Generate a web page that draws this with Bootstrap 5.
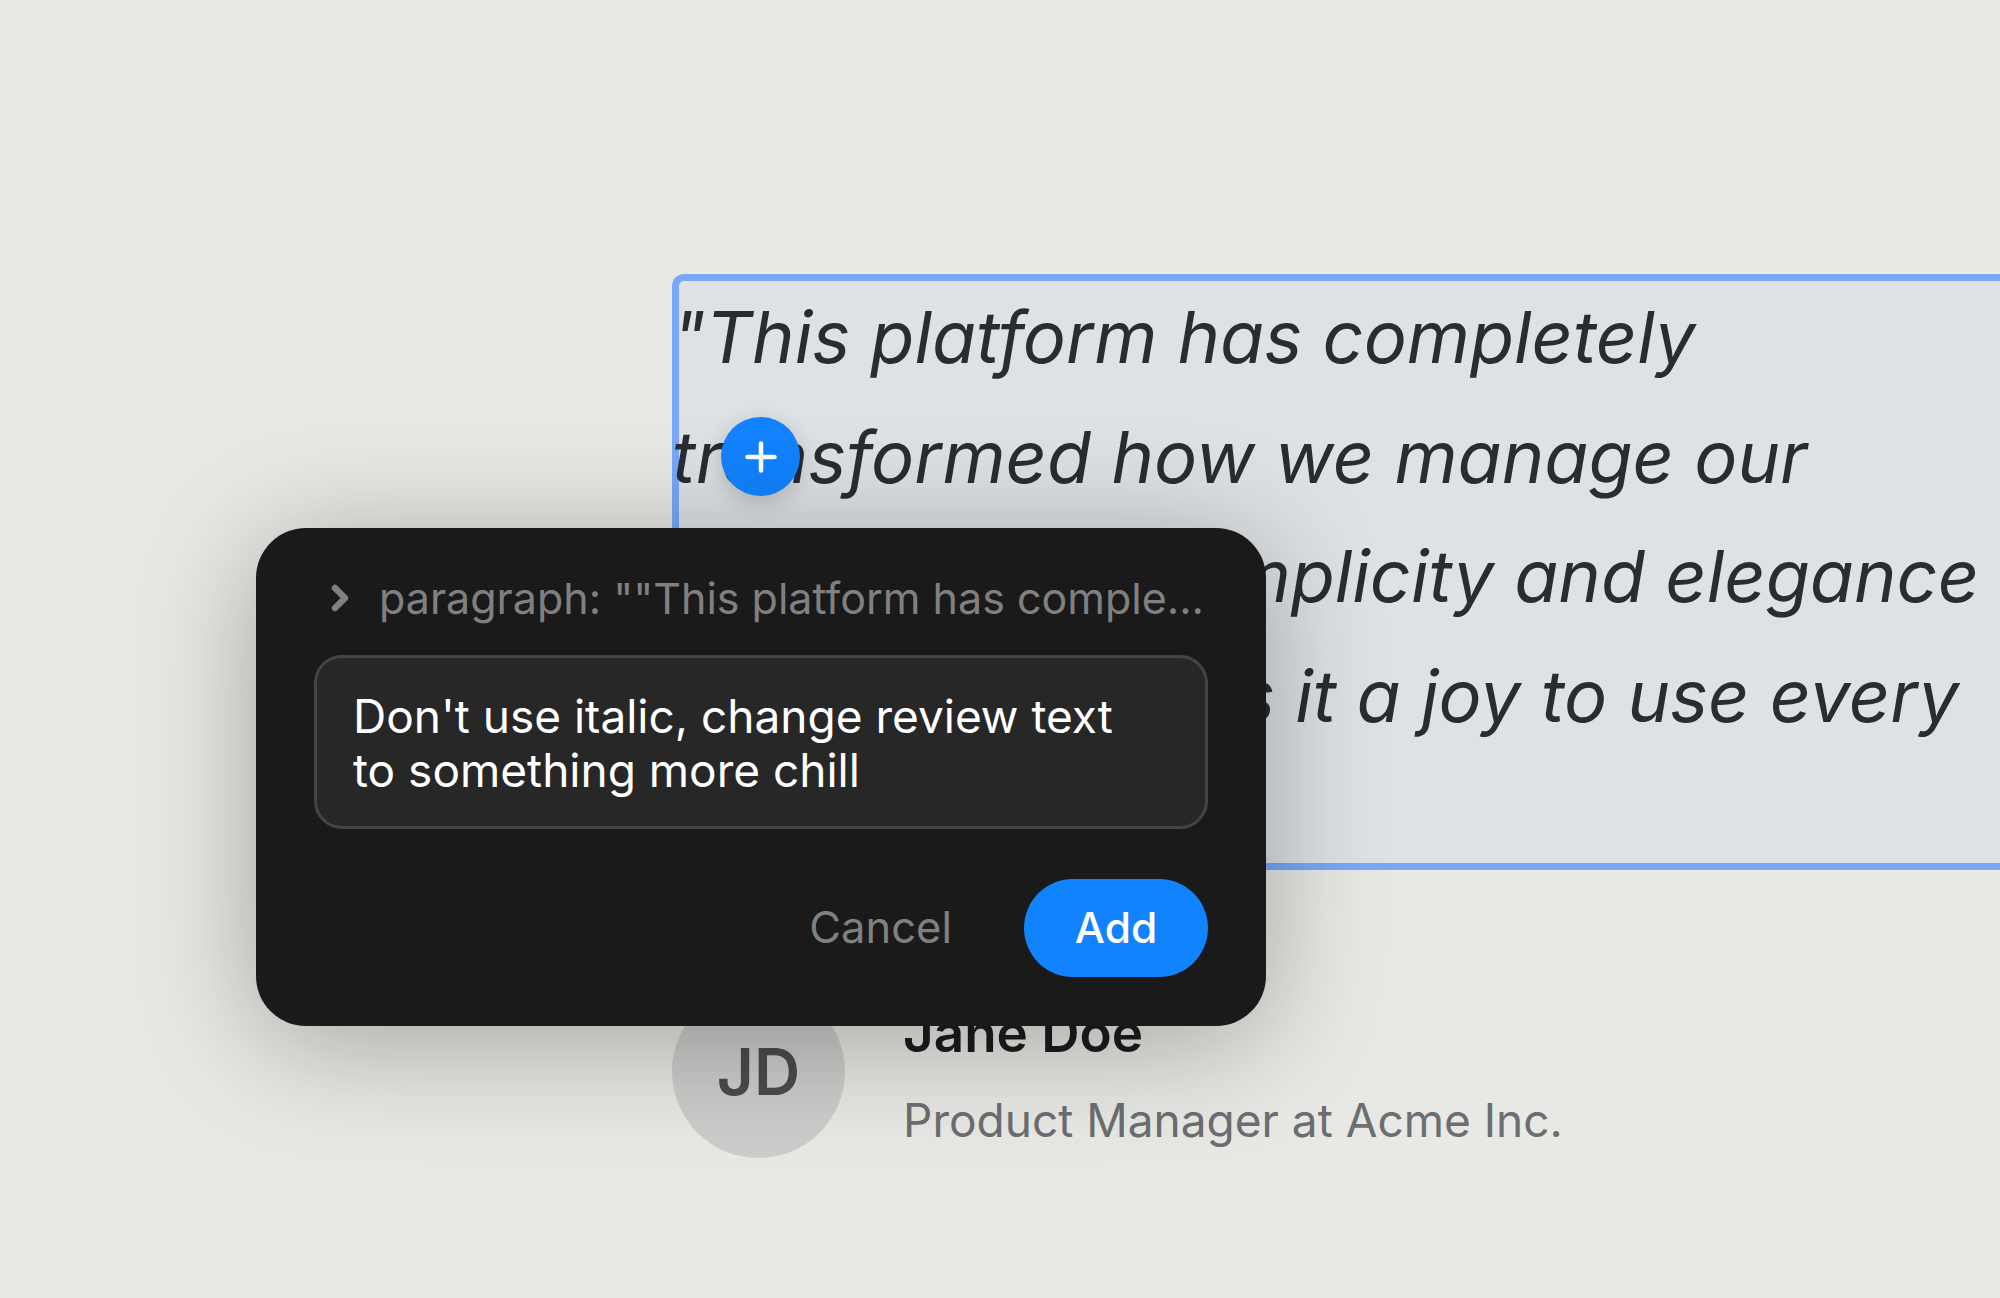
<!DOCTYPE html>
<html lang="en">
<head>
    <meta charset="UTF-8">
    <meta name="viewport" content="width=device-width, initial-scale=1.0">
    <link href="https://cdn.jsdelivr.net/npm/bootstrap@5.3.3/dist/css/bootstrap.min.css" rel="stylesheet">
    <script src="https://cdn.jsdelivr.net/npm/bootstrap@5.3.3/dist/js/bootstrap.bundle.min.js"></script>
    <title>Add comment</title>
    <style>
        html, body { height: 100%; overflow: hidden; }
        body { background: #e8e9e4; font-family: Inter, "Liberation Sans", sans-serif; }
        .review-page { position: relative; width: 2000px; height: 1298px; padding: 274px 0 0 672px; overflow: hidden; }
        .review-quote { width: 1500px; height: 596px; margin: 0; padding: 3px 0 0 0; border-radius: 12px; background: #dee2e5; box-shadow: inset 0 0 0 7px #78a9f8; color: #292d33; font-size: 72px; line-height: 119.5px; font-style: italic; white-space: nowrap; overflow: hidden; }
        .quote-lead { word-spacing: 2.5px; }
        .review-author { margin-top: 115px; gap: 58px; }
        .author-avatar { width: 173px; height: 173px; background: #cdcdcb; color: #4b4c4e; font-size: 64px; font-weight: 600; }
        .author-text { padding-top: 7px; }
        .author-name { color: #1c1c1e; font-size: 53px; font-weight: 600; line-height: 58px; margin: 0 0 31px; }
        .author-role { color: #6c6e71; font-size: 46px; line-height: 54px; margin: 0; }
        .insert-dot { position: absolute; left: 721px; top: 417px; width: 79px; height: 79px; background: #1283fe; box-shadow: 0 6px 22px rgba(0, 0, 0, .18); }
        .comment-popup { position: absolute; left: 256px; top: 528px; width: 1010px; height: 498px; padding: 43px 58px 50px 58px; background: #1a1a1a; border-radius: 50px; box-shadow: 0 16px 120px rgba(0, 0, 0, .3); }
        .popup-path { gap: 30px; padding-left: 17px; height: 54px; color: #808080; font-size: 43px; white-space: nowrap; }
        .popup-input.form-control { margin-top: 30px; height: 174px; padding: 31px 56px 31px 36px; background: #272727; border: 3.5px solid #444; border-radius: 28px; color: #fff; font-size: 46px; line-height: 54px; }
        .popup-actions { margin-top: 50px; gap: 72px; }
        .popup-cancel { color: #808080; font-size: 43.5px; }
        .popup-add.btn { width: 184px; height: 98px; padding: 0; background: #1283fe; border: 0; border-radius: 49px; color: #fff; font-size: 42.5px; font-weight: 500; }
    </style>
</head>
<body>
    <div class="review-page">
        <blockquote class="review-quote">"This platform has completely<br>transformed how we manage our<br>workflow. The simplicity and elegance<br><span class="quote-lead">of the app </span>makes it a joy to use every<br>day."</blockquote>
        <div class="review-author d-flex align-items-center">
            <div class="author-avatar rounded-circle d-flex align-items-center justify-content-center">JD</div>
            <div class="author-text">
                <p class="author-name">Jane Doe</p>
                <p class="author-role">Product Manager at Acme Inc.</p>
            </div>
        </div>

        <div class="insert-dot rounded-circle d-flex align-items-center justify-content-center">
            <svg width="32" height="32" viewBox="0 0 32 32" fill="none" stroke="#fff" stroke-width="4.5" stroke-linecap="round"><path d="M16 2.5v27M2.5 16h27"/></svg>
        </div>

        <div class="comment-popup">
            <div class="popup-path d-flex align-items-center">
                <svg width="18" height="28" viewBox="0 0 18 28" fill="none" stroke="#808080" stroke-width="6.5" stroke-linecap="round" stroke-linejoin="round"><path d="M4 4l10 10L4 24"/></svg>
                <span>paragraph: ""This platform has comple...</span>
            </div>
            <div class="popup-input form-control">Don't use italic, change review text to something more chill</div>
            <div class="popup-actions d-flex align-items-center justify-content-end">
                <span class="popup-cancel">Cancel</span>
                <button type="button" class="popup-add btn">Add</button>
            </div>
        </div>
    </div>
</body>
</html>
